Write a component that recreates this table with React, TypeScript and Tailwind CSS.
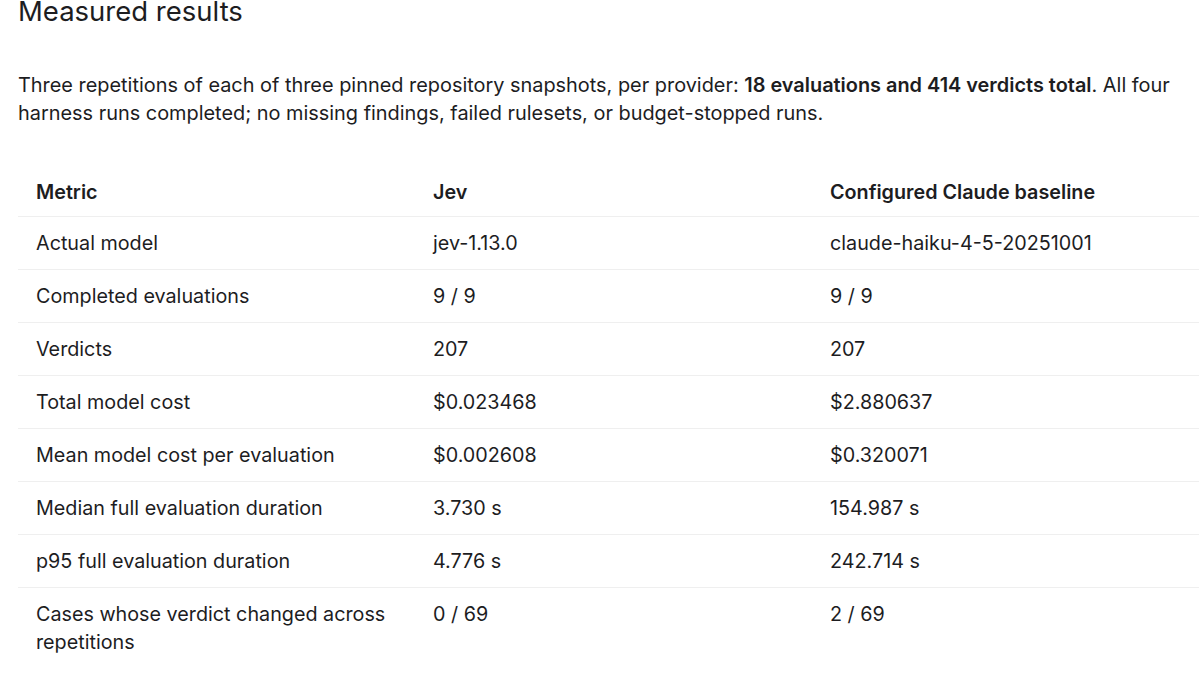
const rows: [string, string, string][] = [
  ["Actual model", "jev-1.13.0", "claude-haiku-4-5-20251001"],
  ["Completed evaluations", "9 / 9", "9 / 9"],
  ["Verdicts", "207", "207"],
  ["Total model cost", "$0.023468", "$2.880637"],
  ["Mean model cost per evaluation", "$0.002608", "$0.320071"],
  ["Median full evaluation duration", "3.730 s", "154.987 s"],
  ["p95 full evaluation duration", "4.776 s", "242.714 s"],
  ["Cases whose verdict changed across repetitions", "0 / 69", "2 / 69"],
];

export default function App() {
  return (
    <main className="h-[698px] overflow-hidden bg-white text-[#1d1d1f] font-['Inter',sans-serif]">
      <div className="pl-[18px] pr-[18px]">
        <h2 className="mt-[-7px] text-[27.5px] leading-[36px] font-normal">Measured results</h2>
        <p className="mt-[42px] text-[19.9px] leading-[28px]">
          Three repetitions of each of three pinned repository snapshots, per provider:{" "}
          <strong className="font-semibold">18 evaluations and 414 verdicts total</strong>. All four harness runs
          completed; no missing findings, failed rulesets, or budget-stopped runs.
        </p>
        <table className="mt-[37px] w-[1191px] table-fixed border-collapse text-[19.75px] leading-[28px]">
          <thead>
            <tr className="border-b border-[#efefef]">
              <th className="w-[397px] px-[18px] pt-[14px] pb-[10px] text-left font-semibold">Metric</th>
              <th className="w-[397px] px-[18px] pt-[14px] pb-[10px] text-left font-semibold">Jev</th>
              <th className="w-[397px] px-[18px] pt-[14px] pb-[10px] text-left font-semibold">Configured Claude baseline</th>
            </tr>
          </thead>
          <tbody>
            {rows.map(([metric, jev, claude]) => (
              <tr key={metric} className="border-b border-[#efefef] last:border-b-0">
                <td className="px-[18px] py-3 align-top">{metric}</td>
                <td className="px-[18px] py-3 align-top">{jev}</td>
                <td className="px-[18px] py-3 align-top">{claude}</td>
              </tr>
            ))}
          </tbody>
        </table>
      </div>
    </main>
  );
}
